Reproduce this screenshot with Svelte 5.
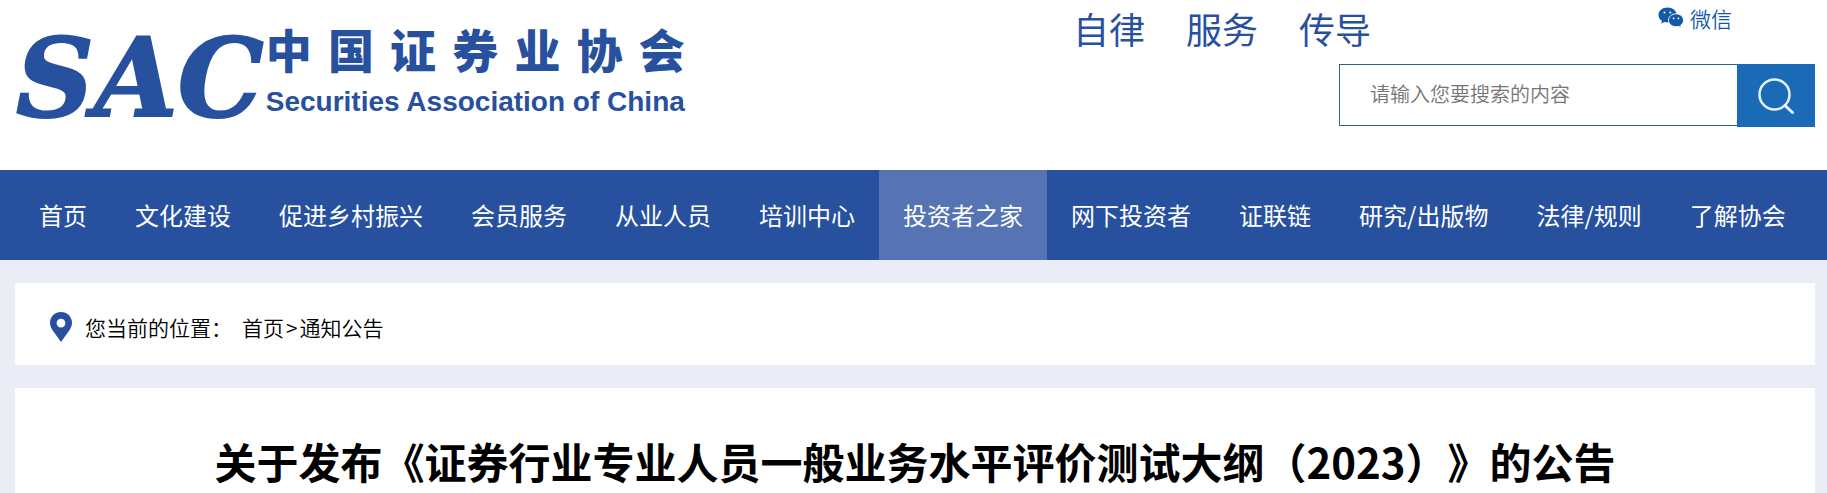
<script lang="ts">
  type NavItem = { label: string; active?: boolean };

  const nav: NavItem[] = [
    { label: "首页" },
    { label: "文化建设" },
    { label: "促进乡村振兴" },
    { label: "会员服务" },
    { label: "从业人员" },
    { label: "培训中心" },
    { label: "投资者之家", active: true },
    { label: "网下投资者" },
    { label: "证联链" },
    { label: "研究/出版物" },
    { label: "法律/规则" },
    { label: "了解协会" },
  ];
  const orgName = [..."中国证券业协会"];
  const slogans = ["自律", "服务", "传导"];

  let keyword = $state("");

  function search(e: SubmitEvent) {
    e.preventDefault();
    keyword = keyword.trim();
  }
</script>

<div class="page">
  <header>
    <a class="logo" href="#home">
      <span class="mark">SAC</span>
      <span class="names">
        <span class="cn">
          {#each orgName as ch}<span>{ch}</span>{/each}
        </span>
        <span class="en">Securities Association of China</span>
      </span>
    </a>

    <div class="tools">
      <div class="top">
        <div class="slogan">
          {#each slogans as s}<span>{s}</span>{/each}
        </div>
        <a class="wechat" href="#wechat">
          <svg width="26" height="22" viewBox="0 0 26 22" aria-hidden="true">
            <path d="M9.5 0.5C4.3 0.5 0.5 3.8 0.5 8c0 2.500 1.300 4.600 3.500 6l-.9 2.800 3.300-1.700c1 .3 2 .4 3.100.4 5.200 0 9.200-3.300 9.200-7.500S14.700.5 9.500.5z" fill="#1459a8" />
            <path d="M18 6.800c-4.300 0-7.500 2.900-7.500 6.500s3.200 6.400 7.500 6.400c.9 0 1.800-.1 2.600-.4l2.700 1.600-.7-2.500c1.700-1.200 2.900-3 2.900-5.100 0-3.600-3.200-6.500-7.500-6.500z" fill="#1459a8" stroke="#fff" stroke-width="0.9" />
            <circle cx="6.500" cy="5.600" r="1" fill="#fff" />
            <circle cx="12.300" cy="5.600" r="1" fill="#fff" />
            <circle cx="15.600" cy="11.300" r="0.900" fill="#fff" />
            <circle cx="20.400" cy="11.300" r="0.900" fill="#fff" />
          </svg>
          微信
        </a>
      </div>
      <form class="search" onsubmit={search}>
        <input type="text" aria-label="搜索" placeholder="请输入您要搜索的内容" bind:value={keyword} />
        <button type="submit" aria-label="搜索">
          <svg width="36" height="36" viewBox="0 0 36 36" fill="none" stroke="#e6f1fb" stroke-width="2.500" stroke-linecap="round" aria-hidden="true">
            <circle cx="16.500" cy="16.500" r="15" />
            <path d="M27 27.500l7.500 7" stroke-width="3" />
          </svg>
        </button>
      </form>
    </div>
  </header>

  <nav>
    {#each nav as item}
      <a href="#nav" class:active={item.active}>{item.label}</a>
    {/each}
  </nav>

  <main>
    <div class="crumbs">
      <svg width="22" height="30" viewBox="0 0 22 30" aria-hidden="true">
        <path d="M11 0C4.900 0 0 4.700 0 10.800 0 13.500 1 15.800 2.400 18L11 30l8.600-12C21 15.800 22 13.500 22 10.800 22 4.700 17.100 0 11 0zm0 6.700a4.400 4.400 0 1 1 0 8.800 4.400 4.400 0 0 1 0-8.800z" fill="#27509f" />
      </svg>
      <span class="here">您当前的位置：</span>
      <a href="#home">首页</a><span class="sep">&gt;</span><a href="#notice">通知公告</a>
    </div>

    <article>
      <h1>关于发布《证券行业专业人员一般业务水平评价测试大纲（2023）》的公告</h1>
    </article>
  </main>
</div>

<style>
  :global(body) {
    margin: 0;
    background: #eaedf5;
  }
  .page {
    display: flex;
    flex-direction: column;
    min-height: 100vh;
    font-family: "Noto Sans CJK SC", sans-serif;
    color: #000;
  }
  a {
    color: inherit;
    text-decoration: none;
  }

  header {
    display: flex;
    justify-content: space-between;
    box-sizing: border-box;
    min-height: 170px;
    padding: 0 12px 0 16px;
    background: #fff;
  }
  .logo {
    display: flex;
    gap: 2px;
    padding-top: 24px;
    color: #27509f;
  }
  .mark {
    font: italic bold 108px/108px "DejaVu Serif", serif;
    -webkit-text-stroke: 2px #27509f;
  }
  .names {
    display: flex;
    flex-direction: column;
    gap: 14px;
  }
  .cn {
    display: flex;
    justify-content: space-between;
    font-size: 46px;
    font-weight: 900;
    line-height: 48px;
  }
  .en {
    font: bold 28px/32px "Liberation Sans", sans-serif;
    white-space: nowrap;
  }

  .tools {
    display: flex;
    flex-direction: column;
    width: 742px;
  }
  .top {
    display: flex;
    justify-content: space-between;
    height: 64px;
    padding-right: 83px;
  }
  .slogan {
    display: flex;
    gap: 41px;
    padding-top: 8px;
    color: #27509f;
    font-size: 36px;
    line-height: 40px;
  }
  .wechat {
    display: flex;
    align-items: center;
    gap: 6px;
    height: 35px;
    color: #1459a8;
    font-size: 21px;
    font-weight: 350;
  }
  .search {
    display: flex;
    align-self: flex-end;
    width: 476px;
  }
  .search input {
    flex: 1;
    box-sizing: border-box;
    min-width: 0;
    height: 62px;
    padding: 0 30px 4px;
    border: 1px solid #2b668f;
    border-right: 0;
    border-radius: 0;
    outline: none;
    background: #fff;
    font: 350 20px "Noto Sans CJK SC", sans-serif;
  }
  .search input::placeholder {
    color: #757575;
  }
  .search button {
    display: flex;
    align-items: center;
    justify-content: center;
    width: 78px;
    height: 63px;
    padding: 0;
    border: 0;
    background: #1a6ab8;
    cursor: pointer;
  }

  nav {
    display: flex;
    flex-wrap: wrap;
    padding: 0 15px;
    background: #27509f;
  }
  nav a {
    padding: 0 24px;
    color: #fff;
    font-size: 24px;
    line-height: 90px;
    white-space: nowrap;
  }
  nav a.active {
    background: #5674b3;
  }

  main {
    display: flex;
    flex: 1;
    flex-direction: column;
    gap: 23px;
    padding: 23px 12px 0 15px;
  }
  .crumbs {
    display: flex;
    align-items: center;
    box-sizing: border-box;
    height: 82px;
    padding: 6px 35px 0;
    background: #fff;
    font-size: 21px;
    font-weight: 350;
  }
  .here {
    margin: 0 10px 0 13px;
  }
  .sep {
    margin: 0 2px;
  }
  article {
    flex: 1;
    padding-top: 43px;
    background: #fff;
  }
  h1 {
    margin: 0;
    font-size: 42px;
    font-weight: 700;
    line-height: 60px;
    text-align: center;
    /* keep full-width brackets at full width */
    text-spacing-trim: space-all;
  }
</style>
